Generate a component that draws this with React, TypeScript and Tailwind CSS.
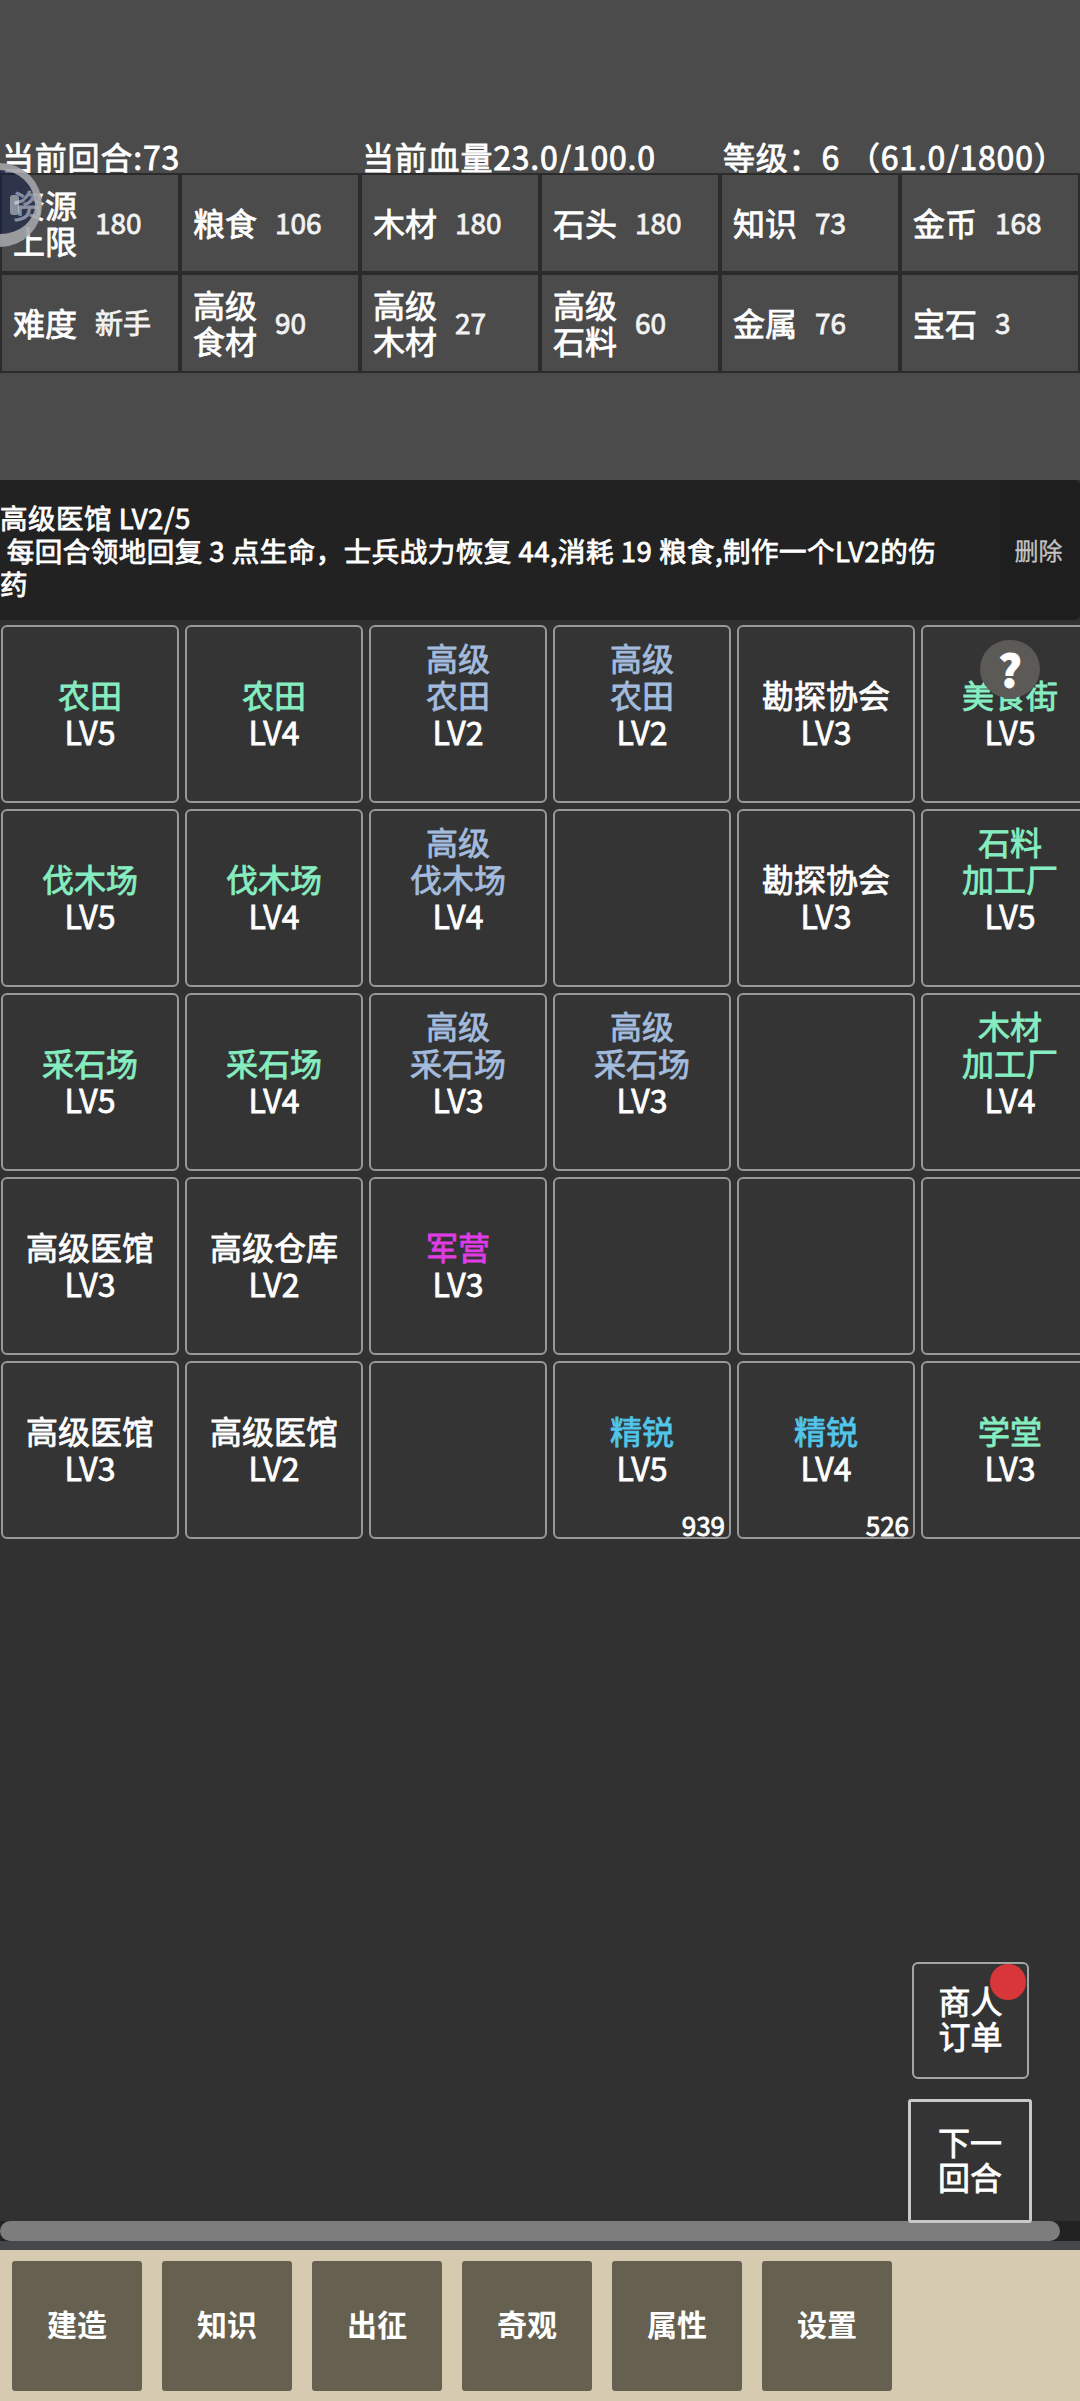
import React from "react"

type Building = {
  name?: string[]
  level?: string
  kind?: "green" | "blue" | "cyan" | "pink" | "white"
  count?: number
}

const nameColors = {
  green: "text-[#86edc1]",
  blue: "text-[#a3bbdd]",
  cyan: "text-[#52c5ea]",
  pink: "text-[#e03ce6]",
  white: "text-white",
}

const buildings: Building[] = [
  { name: ["农田"], level: "LV5", kind: "green" },
  { name: ["农田"], level: "LV4", kind: "green" },
  { name: ["高级", "农田"], level: "LV2", kind: "blue" },
  { name: ["高级", "农田"], level: "LV2", kind: "blue" },
  { name: ["勘探协会"], level: "LV3", kind: "white" },
  { name: ["美食街"], level: "LV5", kind: "green" },

  { name: ["伐木场"], level: "LV5", kind: "green" },
  { name: ["伐木场"], level: "LV4", kind: "green" },
  { name: ["高级", "伐木场"], level: "LV4", kind: "blue" },
  {},
  { name: ["勘探协会"], level: "LV3", kind: "white" },
  { name: ["石料", "加工厂"], level: "LV5", kind: "green" },

  { name: ["采石场"], level: "LV5", kind: "green" },
  { name: ["采石场"], level: "LV4", kind: "green" },
  { name: ["高级", "采石场"], level: "LV3", kind: "blue" },
  { name: ["高级", "采石场"], level: "LV3", kind: "blue" },
  {},
  { name: ["木材", "加工厂"], level: "LV4", kind: "green" },

  { name: ["高级医馆"], level: "LV3", kind: "white" },
  { name: ["高级仓库"], level: "LV2", kind: "white" },
  { name: ["军营"], level: "LV3", kind: "pink" },
  {},
  {},
  {},

  { name: ["高级医馆"], level: "LV3", kind: "white" },
  { name: ["高级医馆"], level: "LV2", kind: "white" },
  {},
  { name: ["精锐"], level: "LV5", kind: "cyan", count: 939 },
  { name: ["精锐"], level: "LV4", kind: "cyan", count: 526 },
  { name: ["学堂"], level: "LV3", kind: "green" },
]

const resources = [
  { label: ["资源", "上限"], value: "180" },
  { label: ["粮食"], value: "106" },
  { label: ["木材"], value: "180" },
  { label: ["石头"], value: "180" },
  { label: ["知识"], value: "73" },
  { label: ["金币"], value: "168" },
  { label: ["难度"], value: "新手" },
  { label: ["高级", "食材"], value: "90" },
  { label: ["高级", "木材"], value: "27" },
  { label: ["高级", "石料"], value: "60" },
  { label: ["金属"], value: "76" },
  { label: ["宝石"], value: "3" },
]

const tabs = ["建造", "知识", "出征", "奇观", "属性", "设置"]

function ResourceCell({ label, value }: { label: string[]; value: string }) {
  return (
    <div className="flex items-center gap-[18px] bg-[#4b4b4b] pb-[3px] pl-[11px] text-white">
      <div className="w-[64px] text-center text-[32px] leading-[36px]">
        {label.map((l) => (
          <div key={l}>{l}</div>
        ))}
      </div>
      <div className="text-[28px] leading-[36px] text-[#f2f2f2]">{value}</div>
    </div>
  )
}

function BuildingCell({ item }: { item: Building }) {
  return (
    <div className="relative flex flex-col items-center justify-center rounded-[6px] border-2 border-[#989898] bg-[#343434] pb-[3px] text-[32px] leading-[37px]">
      {item.name && (
        // the last name line stays put, longer names grow upward
        <div className="flex h-[74px] flex-col items-center justify-end">
          <div className="flex flex-col items-center">
            {item.name.map((line, i) => (
              <div key={i} className={nameColors[item.kind ?? "white"]}>
                {line}
              </div>
            ))}
            <div className="text-white">{item.level}</div>
          </div>
        </div>
      )}
      {item.count && (
        <div className="absolute right-[4px] bottom-[-5px] text-[26px] leading-[34px] text-white">
          {item.count}
        </div>
      )}
    </div>
  )
}

export default function App() {
  return (
    <div className="relative flex h-[2401px] w-[1080px] flex-col overflow-hidden bg-[#313131] font-['Noto_Sans_CJK_SC',sans-serif] [-webkit-text-stroke:0.8px] [text-spacing-trim:space-all]">
      {/* Top stats */}
      <div className="flex h-[480px] shrink-0 flex-col bg-[#4b4b4b] pt-[135px]">
        <div className="flex h-[38px] items-center pt-[3px] text-[32px] leading-[38px] tracking-[0.8px] text-white">
          <div className="w-[362px] pl-[2px]">当前回合:73</div>
          <div className="w-[361px]">当前血量23.0/100.0</div>
          <div className="whitespace-nowrap">
            等级：6<span className="ml-[8px]">（61.0/1800）</span>
          </div>
        </div>
        <div className="grid grid-cols-6 gap-[4px] bg-[#2b2b2b] p-[2px] [grid-auto-rows:96px]">
          {resources.map((r, i) => (
            <ResourceCell key={i} label={r.label} value={r.value} />
          ))}
        </div>
      </div>

      {/* Selected building details */}
      <div className="flex h-[140px] shrink-0 rounded-r-[6px] bg-[#222222] text-white">
        <div className="flex w-[1000px] items-center">
          <div className="w-[950px] text-[27.5px] leading-[33px] tracking-[0.5px] whitespace-pre-wrap">
            <div>高级医馆 LV2/5</div>
            <div> 每回合领地回复 3 点生命，士兵战力恢复 44,消耗 19 粮食,制作一个LV2的伤药</div>
          </div>
        </div>
        <div className="flex flex-1 items-center justify-center rounded-r-[6px] bg-[#1e1e1e] pr-[3px] text-[24px] text-[#c4c4c4] [-webkit-text-stroke:0.3px]">
          删除
        </div>
      </div>

      {/* Building grid, wider than the screen */}
      <div className="flex-1 overflow-hidden pt-[5px] pl-[1px]">
        <div className="grid w-[1140px] grid-cols-[repeat(6,178px)] gap-[6px] [grid-auto-rows:178px]">
          {buildings.map((b, i) => (
            <BuildingCell key={i} item={b} />
          ))}
        </div>
      </div>

      {/* Scrollbar */}
      <div className="h-[20px] shrink-0 bg-[#222222]">
        <div className="h-full w-[1060px] rounded-full bg-[#7d7d7d]" />
      </div>
      <div className="h-[9px] shrink-0 bg-[#45484a]" />

      {/* Bottom tabs */}
      <div className="flex h-[151px] shrink-0 gap-[20px] bg-[#d6cbb0] pt-[11px] pl-[12px]">
        {tabs.map((t) => (
          <div
            key={t}
            className="flex h-[130px] w-[130px] items-center justify-center rounded-[3px] bg-[#656050] pb-[5px] text-[30px] font-bold text-white [-webkit-text-stroke:0]"
          >
            {t}
          </div>
        ))}
      </div>

      {/* Floating buttons */}
      <div className="absolute top-[1962px] left-[912px] flex h-[117px] w-[117px] items-center justify-center rounded-[6px] border-2 border-[#a5a5a5] bg-[#343434] pb-[6px] text-center text-[32px] leading-[35px] text-white">
        <div>
          商人
          <br />
          订单
        </div>
        <div className="absolute top-[0px] right-[1px] h-[36px] w-[36px] rounded-full bg-[#d9363a]" />
      </div>
      <div className="absolute top-[2099px] left-[908px] flex h-[124px] w-[124px] items-center justify-center rounded-[3px] border-[3px] border-[#c8c8c8] bg-[#343434] pb-[4px] text-center text-[32px] leading-[35px] text-white">
        <div>
          下一
          <br />
          回合
        </div>
      </div>

      {/* Overlay bubbles */}
      <div className="absolute top-[163px] left-[-42px] h-[84px] w-[84px] rounded-full border-[7px] border-b-[13px] border-[#b5b5b5]/80 bg-[#12204a]/50">
        <div className="absolute top-[25px] left-[45px] h-[20px] w-[9px] rounded-[3px] bg-white/45" />
      </div>
      <div className="absolute top-[640px] left-[980px] flex h-[58px] w-[60px] items-center justify-center rounded-full bg-[#5c5a57] pb-[2px] text-[44px] leading-none font-black text-white">
        ?
      </div>
    </div>
  )
}
